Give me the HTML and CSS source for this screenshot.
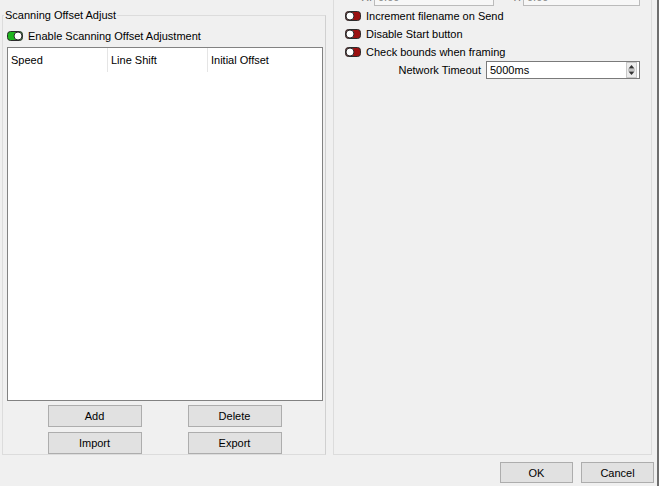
FILE: index.html
```html
<!DOCTYPE html>
<html lang="en">
<head>
    <meta charset="UTF-8">
    <title>Settings</title>
    <link rel="stylesheet" href="styles.css">
</head>
<body>
    <div class="window">
        <div class="main">
            <fieldset class="group">
                <legend>Scanning Offset Adjust</legend>
                <label class="toggle-row">
                    <svg class="toggle" width="16" height="10" viewBox="0 0 16 10">
                        <rect x="0.5" y="0.5" width="15" height="9" rx="3" fill="#1fb51f" stroke="#2b2b2b"/>
                        <circle cx="11" cy="5" r="4" fill="#fff" stroke="#2b2b2b"/>
                    </svg>
                    Enable Scanning Offset Adjustment
                </label>
                <div class="list">
                    <div class="list-head">
                        <div class="col">Speed</div>
                        <div class="col">Line Shift</div>
                        <div class="col">Initial Offset</div>
                    </div>
                </div>
                <div class="btn-grid">
                    <button class="btn">Add</button>
                    <button class="btn">Delete</button>
                    <button class="btn">Import</button>
                    <button class="btn">Export</button>
                </div>
            </fieldset>

            <div class="panel">
                <div class="coords">
                    <span class="coord-label">X:</span>
                    <div class="spin small"><span>0.00</span><span class="arrows">&#9650;&#9660;</span></div>
                    <span class="coord-label y">Y:</span>
                    <div class="spin small second"><span>0.00</span><span class="arrows">&#9650;&#9660;</span></div>
                </div>
                <label class="toggle-row">
                    <svg class="toggle" width="16" height="10" viewBox="0 0 16 10">
                        <rect x="0.5" y="0.5" width="15" height="9" rx="3" fill="#9b1010" stroke="#2b2b2b"/>
                        <circle cx="5" cy="5" r="4" fill="#fff" stroke="#2b2b2b"/>
                    </svg>
                    Increment filename on Send
                </label>
                <label class="toggle-row">
                    <svg class="toggle" width="16" height="10" viewBox="0 0 16 10">
                        <rect x="0.5" y="0.5" width="15" height="9" rx="3" fill="#9b1010" stroke="#2b2b2b"/>
                        <circle cx="5" cy="5" r="4" fill="#fff" stroke="#2b2b2b"/>
                    </svg>
                    Disable Start button
                </label>
                <label class="toggle-row">
                    <svg class="toggle" width="16" height="10" viewBox="0 0 16 10">
                        <rect x="0.5" y="0.5" width="15" height="9" rx="3" fill="#9b1010" stroke="#2b2b2b"/>
                        <circle cx="5" cy="5" r="4" fill="#fff" stroke="#2b2b2b"/>
                    </svg>
                    Check bounds when framing
                </label>
                <div class="field-row">
                    <span class="field-label">Network Timeout</span>
                    <div class="spin">
                        <span>5000ms</span>
                        <span class="spin-btn">
                            <svg width="9" height="14" viewBox="0 0 9 14">
                                <path d="M4.5 2 L7.5 5.5 L1.5 5.5 Z" fill="#333"/>
                                <path d="M1 7 H8" stroke="#999"/>
                                <path d="M1.5 8.5 L7.5 8.5 L4.5 12 Z" fill="#333"/>
                            </svg>
                        </span>
                    </div>
                </div>
            </div>
        </div>

        <div class="footer">
            <button class="btn dialog">OK</button>
            <button class="btn dialog">Cancel</button>
        </div>
    </div>
</body>
</html>
```

FILE: styles.css
```css
body {
    margin: 0;
    padding: 0;
    background-color: #f0f0f0;
    font-family: 'Liberation Sans', Arial, sans-serif;
    font-size: 11px;
    color: #000;
}
.window {
    width: 657px;
    height: 486px;
    border-right: 2px solid #6e6e6e;
    overflow: hidden;
}
.main {
    display: flex;
    height: 455px;
    padding-left: 2px;
    gap: 7px;
}
.group {
    width: 324px;
    box-sizing: border-box;
    margin: 8px 0 0;
    padding: 0;
    border: 1px solid #dcdcdc;
    border-right-color: #d0d0d0;
    display: flex;
    flex-direction: column;
}
.group legend {
    margin-left: 1px;
    padding: 0 1px;
    line-height: 14px;
}
.toggle-row {
    display: flex;
    align-items: center;
    gap: 5px;
    height: 18px;
}
.toggle {
    display: block;
}
.group .toggle-row {
    margin: 5px 0 0 4px;
}
.list {
    margin: 2px 2px 0 4px;
    height: 353px;
    background: #fff;
    border: 1px solid #828282;
}
.list-head {
    display: flex;
    height: 24px;
}
.col {
    width: 100px;
    box-sizing: border-box;
    border-right: 1px solid #e5e5e5;
    padding-left: 3px;
    line-height: 24px;
}
.col:last-child {
    border-right: none;
}
.btn-grid {
    display: grid;
    grid-template-columns: 94px 94px;
    column-gap: 46px;
    row-gap: 5px;
    justify-content: center;
    margin: 4px 0 0 1px;
}
.btn {
    height: 22px;
    padding: 0;
    background-color: #e1e1e1;
    border: 1px solid #adadad;
    font-family: inherit;
    font-size: 11px;
    color: #000;
}
.panel {
    width: 319px;
    box-sizing: border-box;
    border: 1px solid #dcdcdc;
    border-top: none;
    padding-left: 11px;
}
.coords {
    display: flex;
    align-items: center;
    height: 20px;
    margin-top: -13px;
    margin-bottom: 0;
}
.coord-label {
    width: 27px;
    text-align: right;
    padding-right: 2px;
    color: #777;
}
.coord-label.y {
    width: 27px;
}
.spin {
    display: flex;
    align-items: center;
    justify-content: space-between;
    height: 18px;
    box-sizing: border-box;
    background: #fff;
    border: 1px solid #7a7a7a;
    padding-left: 3px;
}
.spin.small {
    width: 120px;
    border-color: #bbb;
    color: #888;
    background: #f7f7f7;
}
.spin.small.second {
    width: 117px;
}
.arrows {
    font-size: 5px;
    width: 14px;
}
.field-row {
    display: flex;
    align-items: center;
    margin-top: 0;
}
.field-label {
    width: 136px;
    text-align: right;
    padding-right: 5px;
}
.field-row .spin {
    width: 154px;
    height: 18px;
}
.spin-btn {
    display: flex;
    margin-right: 2px;
    border: 1px solid #c8c8c8;
    background: #ececec;
}
.footer {
    display: flex;
    justify-content: flex-end;
    gap: 8px;
    padding: 7px 3px 0 0;
}
.btn.dialog {
    width: 73px;
    height: 21px;
}
```
